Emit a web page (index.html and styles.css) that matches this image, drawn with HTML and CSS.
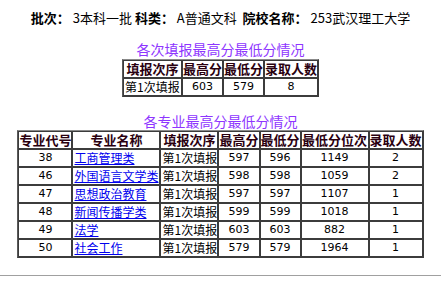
FILE: index.html
```html
<!DOCTYPE html>
<html lang="zh-CN">
<head>
<meta charset="utf-8">
<link rel="stylesheet" href="styles.css">
</head>
<body>
<div class="info"><b>批次：</b> 3本科一批 <b>科类：</b> A普通文科 &nbsp;<b>院校名称：</b> 253武汉理工大学</div>
<div class="title t1title">各次填报最高分最低分情况</div>
<table class="grid g1">
<tr><th class="a1">填报次序</th><th class="a2">最高分</th><th class="a3">最低分</th><th class="a4">录取人数</th></tr>
<tr><td class="txt">第1次填报</td><td>603</td><td>579</td><td>8</td></tr>
</table>
<div class="title t2title">各专业最高分最低分情况</div>
<table class="grid g2">
<tr><th class="b1">专业代号</th><th class="b2">专业名称</th><th class="b3">填报次序</th><th class="b4">最高分</th><th class="b5">最低分</th><th class="b6">最低分位次</th><th class="b7">录取人数</th></tr>
<tr><td>38</td><td class="txt"><a href="#">工商管理类</a></td><td class="txt">第1次填报</td><td>597</td><td>596</td><td>1149</td><td>2</td></tr>
<tr><td>46</td><td class="txt"><a href="#">外国语言文学类</a></td><td class="txt">第1次填报</td><td>598</td><td>598</td><td>1059</td><td>2</td></tr>
<tr><td>47</td><td class="txt"><a href="#">思想政治教育</a></td><td class="txt">第1次填报</td><td>597</td><td>597</td><td>1107</td><td>1</td></tr>
<tr><td>48</td><td class="txt"><a href="#">新闻传播学类</a></td><td class="txt">第1次填报</td><td>599</td><td>599</td><td>1018</td><td>1</td></tr>
<tr><td>49</td><td class="txt"><a href="#">法学</a></td><td class="txt">第1次填报</td><td>603</td><td>603</td><td>882</td><td>1</td></tr>
<tr><td>50</td><td class="txt"><a href="#">社会工作</a></td><td class="txt">第1次填报</td><td>579</td><td>579</td><td>1964</td><td>1</td></tr>
</table>
<hr class="rule">
</body>
</html>
```
FILE: styles.css
```css
html, body {
  margin: 0;
  padding: 0;
  background: #fff;
}
body {
  font-family: "Noto Sans CJK SC", sans-serif;
  color: #000;
}
.info {
  text-align: center;
  font-size: 13px;
  line-height: 18px;
  padding-top: 9px;
  height: 27px;
  white-space: nowrap;
}
.info b {
  font-weight: bold;
}
.title {
  text-align: center;
  color: #8e35ff;
  font-size: 14px;
  line-height: 17px;
}
.t1title {
  margin-top: 5px;
  height: 18px;
}
.t2title {
  margin-top: 16px;
  height: 17px;
}
.grid {
  margin: 0 auto;
  border-collapse: separate;
  border-spacing: 0;
  border: 1px solid #3c3c3c;
  border-top-color: #8a8a8a;
  border-left-color: #5a5a5a;
}
.grid th, .grid td {
  box-sizing: border-box;
  border: 1px solid #3c3c3c;
  padding: 0;
  height: 18px;
  line-height: 16px;
  text-align: center;
  white-space: nowrap;
}
.grid th {
  font-size: 13px;
  font-weight: bold;
  color: #2a0010;
}
.grid td {
  font-family: "DejaVu Sans", sans-serif;
  font-size: 11px;
}
.grid td.txt {
  font-family: "Noto Sans CJK SC", sans-serif;
  font-size: 12px;
  text-align: left;
  padding-left: 1px;
}
.grid a {
  color: #0000ee;
  text-decoration: underline;
}
.g1 .a1 { width: 59px; }
.g1 .a2 { width: 41px; }
.g1 .a3 { width: 40px; }
.g1 .a4 { width: 53px; }
.g2 { margin-top: 0; }
.g2 .b1 { width: 54px; }
.g2 .b2 { width: 88px; }
.g2 .b3 { width: 58px; }
.g2 .b4 { width: 40px; }
.g2 .b5 { width: 40px; }
.g2 .b6 { width: 68px; }
.g2 .b7 { width: 51px; }
.rule {
  margin: 17px 0 0;
  border: 0;
  border-top: 1px solid #a0a0a0;
  height: 0;
}
```
